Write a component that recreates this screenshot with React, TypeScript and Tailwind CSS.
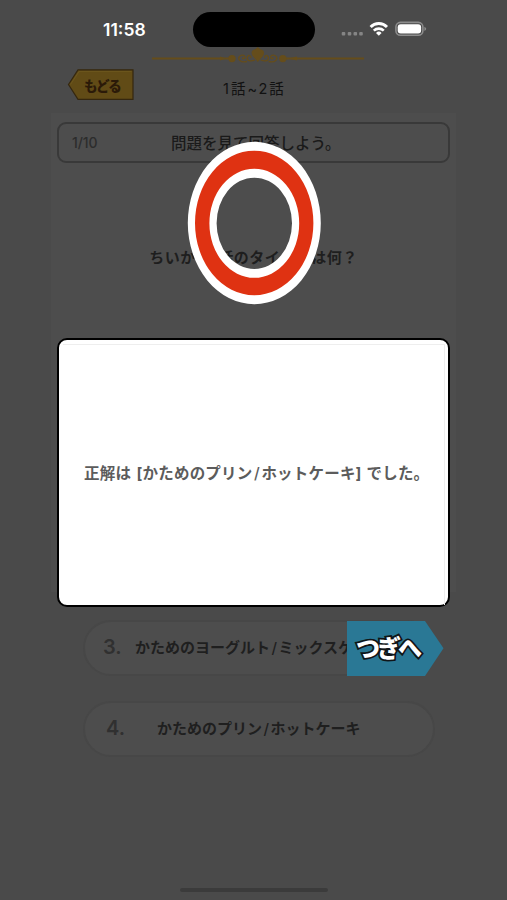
import React from "react";

const JP = "font-['Inter','Noto_Sans_CJK_JP',sans-serif]";
const CJK = "font-['Noto_Sans_CJK_JP',sans-serif]";

function StatusBar() {
  return (
    <div className="flex h-[47px] items-start">
      <div className="w-[193px] pl-[103px] pt-[18px] text-[17.5px] font-semibold leading-6 tracking-[0px] text-white">11:58</div>
      <div className="mt-3 h-[35px] w-[122px] rounded-full bg-black" />
      <svg className="ml-[25px] mt-[20px] h-[18px] w-[88px]" viewBox="340 20 88 18" fill="none">
        {[343.5, 349.5, 355.3, 361].map((x) => (
          <rect key={x} x={x - 1.8} y="32" width="3.6" height="3.4" rx="1" fill="#858585" />
        ))}
        <path d="M370.6 27 A11.5 11.5 0 0 1 387 27" stroke="#fff" strokeWidth="2.9" />
        <path d="M373.8 30.6 A7.2 7.2 0 0 1 383.8 30.6" stroke="#fff" strokeWidth="2.6" />
        <path d="M378.8 35.8 L376 32.9 Q378.8 30.3 381.6 32.9 Z" fill="#fff" />
        <rect x="395.9" y="22.4" width="27" height="12.8" rx="4.5" stroke="#8c8c8c" strokeWidth="1.6" />
        <rect x="397.7" y="24.2" width="23.4" height="9.4" rx="3" fill="#fff" />
        <path d="M424.4 26.7 Q428 28.8 424.4 31 Z" fill="#8c8c8c" />
      </svg>
    </div>
  );
}

function Ornament() {
  return (
    <svg className="ml-[150px] h-[18px] w-[216px]" viewBox="150 47 216 18" fill="none">
      <path d="M152 58.5 H231 M284 58.5 H364" stroke="#654d1b" strokeWidth="2" />
      <path d="M220 56.6 L226 58.5 L220 60.4 Z M297 56.6 L289 58.5 L297 60.4 Z" fill="#654d1b" />
      <circle cx="232" cy="58.6" r="3.7" fill="#654d1b" />
      <circle cx="282.8" cy="58.6" r="3.7" fill="#654d1b" />
      <path d="M257.8 47 L260.3 49.3 Q266 50.5 263 56 L257.8 62 L252.6 56 Q249.6 50.5 255.3 49.3 Z" fill="#654d1b" />
      <g stroke="#654d1b" strokeWidth="1.3">
        <path d="M255 60 C249 62 246 60 247.5 56.5 C249 54.5 252 56 250.5 58 M247 61.5 C240 63 237.5 59 239.5 56.5 C242 53.5 246.5 56 244.5 58.3 C243 59.5 242 58 243 57.4" />
        <path d="M260.6 60 C266.6 62 269.6 60 268.1 56.5 C266.6 54.5 263.6 56 265.1 58 M268.6 61.5 C275.6 63 278.1 59 276.1 56.5 C273.6 53.5 269.1 56 271.1 58.3 C272.6 59.5 273.6 58 272.6 57.4" />
      </g>
    </svg>
  );
}

function Header() {
  return (
    <div className="flex h-[48px]">
      <button className="relative ml-[67px] mt-[4px] h-[32px] w-[67px]">
        <svg className="absolute inset-0" width="67" height="32" viewBox="0 0 67 32">
          <path d="M1.5 15.5 L11 0.8 H66 V30.4 H11 Z" fill="#614b16" stroke="#35270f" strokeWidth="1.2" />
          <path d="M3.5 15.5 L12 2.6 H64.5" fill="none" stroke="#6d571d" />
        </svg>
        <span className={`relative block pl-[17px] text-left text-[13.5px] font-black leading-[29px] tracking-[-1.2px] text-[#2b1a08] ${CJK}`}>もどる</span>
      </button>
      <div className={`ml-[89px] mt-[12px] whitespace-nowrap text-[14.5px] font-normal leading-6 tracking-[2px] text-[#111111] ${JP}`}>1話~2話</div>
    </div>
  );
}

function Dish({ before, after }: { before: string; after: string }) {
  return (
    <>
      {before}
      <span className="mx-[1.5px] font-medium">/</span>
      {after}
    </>
  );
}

function Answer({ number, before, after, numberClass }: { number: string; before: string; after: string; numberClass: string }) {
  return (
    <div className="flex h-[56px] items-center rounded-full border-2 border-[#474747] bg-[#4d4d4d] whitespace-nowrap">
      <span className={`shrink-0 pb-[3px] text-[20px] font-semibold leading-none text-[#303030] ${numberClass}`}>{number}</span>
      <span className={`shrink-0 text-[15px] font-bold text-[#1f1f1f] ${JP}`}>
        <Dish before={before} after={after} />
      </span>
    </div>
  );
}

function ResultOverlay() {
  return (
    <div className="absolute inset-0 flex flex-col">
      <svg className="ml-[187px] mt-[141px] h-[164px] w-[134px] shrink-0" viewBox="187 141 134 164">
        <path
          fill="#fff"
          fillRule="evenodd"
          d="M187.8 223 A66.5 81.2 0 0 1 320.8 223 A66.5 81.2 0 0 1 187.8 223 Z M216.6 223.3 A37.7 45.7 0 0 0 292 223.3 A37.7 45.7 0 0 0 216.6 223.3 Z"
        />
        <path
          fill="#df3212"
          fillRule="evenodd"
          d="M195 223 A59.2 72.2 0 0 1 313.4 223 A59.2 72.2 0 0 1 195 223 Z M209.4 223.3 A44.9 54.5 0 0 0 299.2 223.3 A44.9 54.5 0 0 0 209.4 223.3 Z"
        />
      </svg>
      <section className="ml-[57px] mt-[33px] flex h-[269px] w-[393px] shrink-0 rounded-[10px] border-2 border-black bg-white">
        <div className="ml-[4px] mr-[3px] mt-[4px] flex flex-1 items-center border-r border-t border-[#eeeeee] pl-[21px] pb-[2px]">
          <p className={`whitespace-nowrap text-[15.5px] font-bold tracking-[0.2px] text-[#5c5c5c] ${JP}`}>
            正解は<span className="ml-[1.5px]"> </span>[<Dish before="かためのプリン" after="ホットケーキ" />]<span className="ml-px"> </span>でした。
          </p>
        </div>
      </section>
      <button className="relative ml-[347px] mt-[14px] h-[55px] w-[97px] shrink-0">
        <svg className="absolute inset-0" width="97" height="55" viewBox="0 0 97 55">
          <path d="M0 0 H78 L96.5 27.3 L78 55 H0 Z" fill="#2a7895" />
        </svg>
        <span className={`absolute left-[9px] top-[8px] whitespace-nowrap text-[24px] font-black leading-9 tracking-[-3px] text-white [-webkit-text-stroke:3.6px_#101518] [paint-order:stroke_fill] ${CJK}`}>つぎへ</span>
      </button>
    </div>
  );
}

export default function App() {
  return (
    <main className={`relative flex h-[900px] w-[507px] flex-col overflow-hidden bg-[#4a4a4a] ${JP}`}>
      <StatusBar />
      <Ornament />
      <Header />
      <section className="mx-[51px] h-[479px] bg-[#4d4d4d] px-[6px] pt-[9px]">
        <div className="flex h-[41px] items-center rounded-[9px] border-2 border-[#393939]">
          <span className="w-[112px] pl-[13px] text-[14px] font-medium tracking-[-0.1px] text-[#2c2c2c]">1/10</span>
          <span className="whitespace-nowrap pt-[3px] text-[15.5px] font-medium text-[#1a1a1a]">問題を見て回答しよう。</span>
        </div>
        <p className="mt-[83px] whitespace-nowrap text-center text-[15px] font-bold leading-6 tracking-[0.5px] text-[#1e1e1e]">ちいかわ1話のタイトルは何？</p>
      </section>
      <div className="ml-[83px] mt-[28px] flex w-[352px] flex-col gap-[25px]">
        <Answer number="3." numberClass="ml-[18px] w-[32px]" before="かためのヨーグルト" after="ミックスケーキ" />
        <Answer number="4." numberClass="ml-[21px] w-[51px]" before="かためのプリン" after="ホットケーキ" />
      </div>
      <div className="ml-[180px] mt-auto mb-[8px] h-[4px] w-[148px] rounded-sm bg-[#3b3b3b]" />
      <ResultOverlay />
    </main>
  );
}
